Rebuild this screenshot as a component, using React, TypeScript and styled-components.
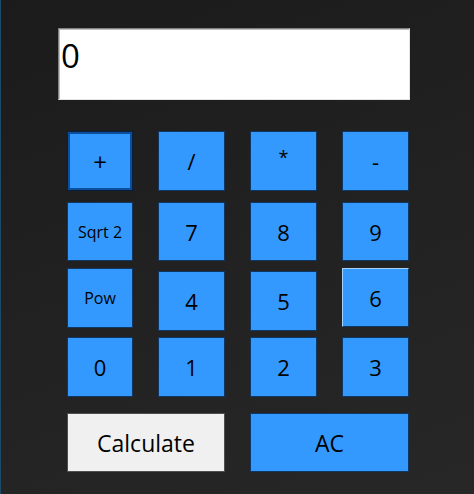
import React from 'react';
import styled, { createGlobalStyle, css } from 'styled-components';

const GlobalStyle = createGlobalStyle`
  html, body {
    margin: 0;
    padding: 0;
    background: #1f1f1f;
  }
  #root {
    height: 494px;
  }
`

const Window = styled.div`
  box-sizing: border-box;
  width: 474px;
  height: 494px;
  border-left: 1px solid #1d4a68;
  padding: 28px 0 0 57px;
  background: linear-gradient(160deg, #1b1b1b 0%, #222222 55%, #272727 100%);
  font-family: 'Open Sans', 'Noto Sans', sans-serif;
`

const Display = styled.div`
  box-sizing: border-box;
  width: 352px;
  height: 72px;
  background: #ffffff;
  border-top: 1px solid #828282;
  border-left: 1px solid #828282;
  border-right: 1px solid #e3e3e3;
  border-bottom: 1px solid #e3e3e3;
  box-shadow: inset 1px 1px 0 #c0c0c0;
  padding: 7px 0 0 2px;
  color: #000;
  font-size: 33px;
  line-height: 40px;
`

const Keypad = styled.div`
  display: grid;
  grid-template-columns: 66px 67px 67px 67px;
  grid-template-rows: 71px 66px 69px 76px 59px;
  column-gap: 25px;
  margin: 31px 0 0 9px;
`

type KeyProps = {
  $size?: number;
  $drop?: boolean;
  $focused?: boolean;
  $hover?: boolean;
  $light?: boolean;
  $span?: number;
  $h?: number;
}

const Key = styled.button<KeyProps>`
  box-sizing: border-box;
  align-self: start;
  height: ${p => p.$h ?? 60}px;
  margin-top: ${p => (p.$drop ? 3 : 0)}px;
  grid-column: span ${p => p.$span ?? 1};
  padding: 0;
  border: 1px solid #103761;
  background: #3399ff;
  color: #000;
  font-family: inherit;
  font-size: ${p => p.$size ?? 22}px;
  cursor: pointer;
  display: flex;
  align-items: center;
  justify-content: center;

  ${p => p.$focused && css`
    border: 1px solid #08203d;
    box-shadow: inset 0 0 0 2px #0b4f9c;
  `}

  ${p => p.$hover && css`
    border-top-color: #a9d0f5;
    border-left-color: #a9d0f5;
  `}

  ${p => p.$light && css`
    background: #f0f0f0;
    border-color: #4f4f4f;
  `}
`

const Star = styled.span`
  display: inline-block;
  font-size: 18px;
  transform: translateY(-4px);
`

export default function App() {
  return (
    <>
      <GlobalStyle />
      <Window>
        <Display>0</Display>
        <Keypad>
          <Key $focused $size={24}>+</Key>
          <Key>/</Key>
          <Key><Star>*</Star></Key>
          <Key>-</Key>

          <Key $size={16} $h={59}>Sqrt 2</Key>
          <Key $h={59}>7</Key>
          <Key $h={59}>8</Key>
          <Key $h={59}>9</Key>

          <Key $size={16}>Pow</Key>
          <Key $drop>4</Key>
          <Key $drop>5</Key>
          <Key $hover $h={59}>6</Key>

          <Key>0</Key>
          <Key>1</Key>
          <Key>2</Key>
          <Key>3</Key>

          <Key $light $span={2} $h={59} $size={23}>Calculate</Key>
          <Key $span={2} $h={59} $size={23}>AC</Key>
        </Keypad>
      </Window>
    </>
  )
}
